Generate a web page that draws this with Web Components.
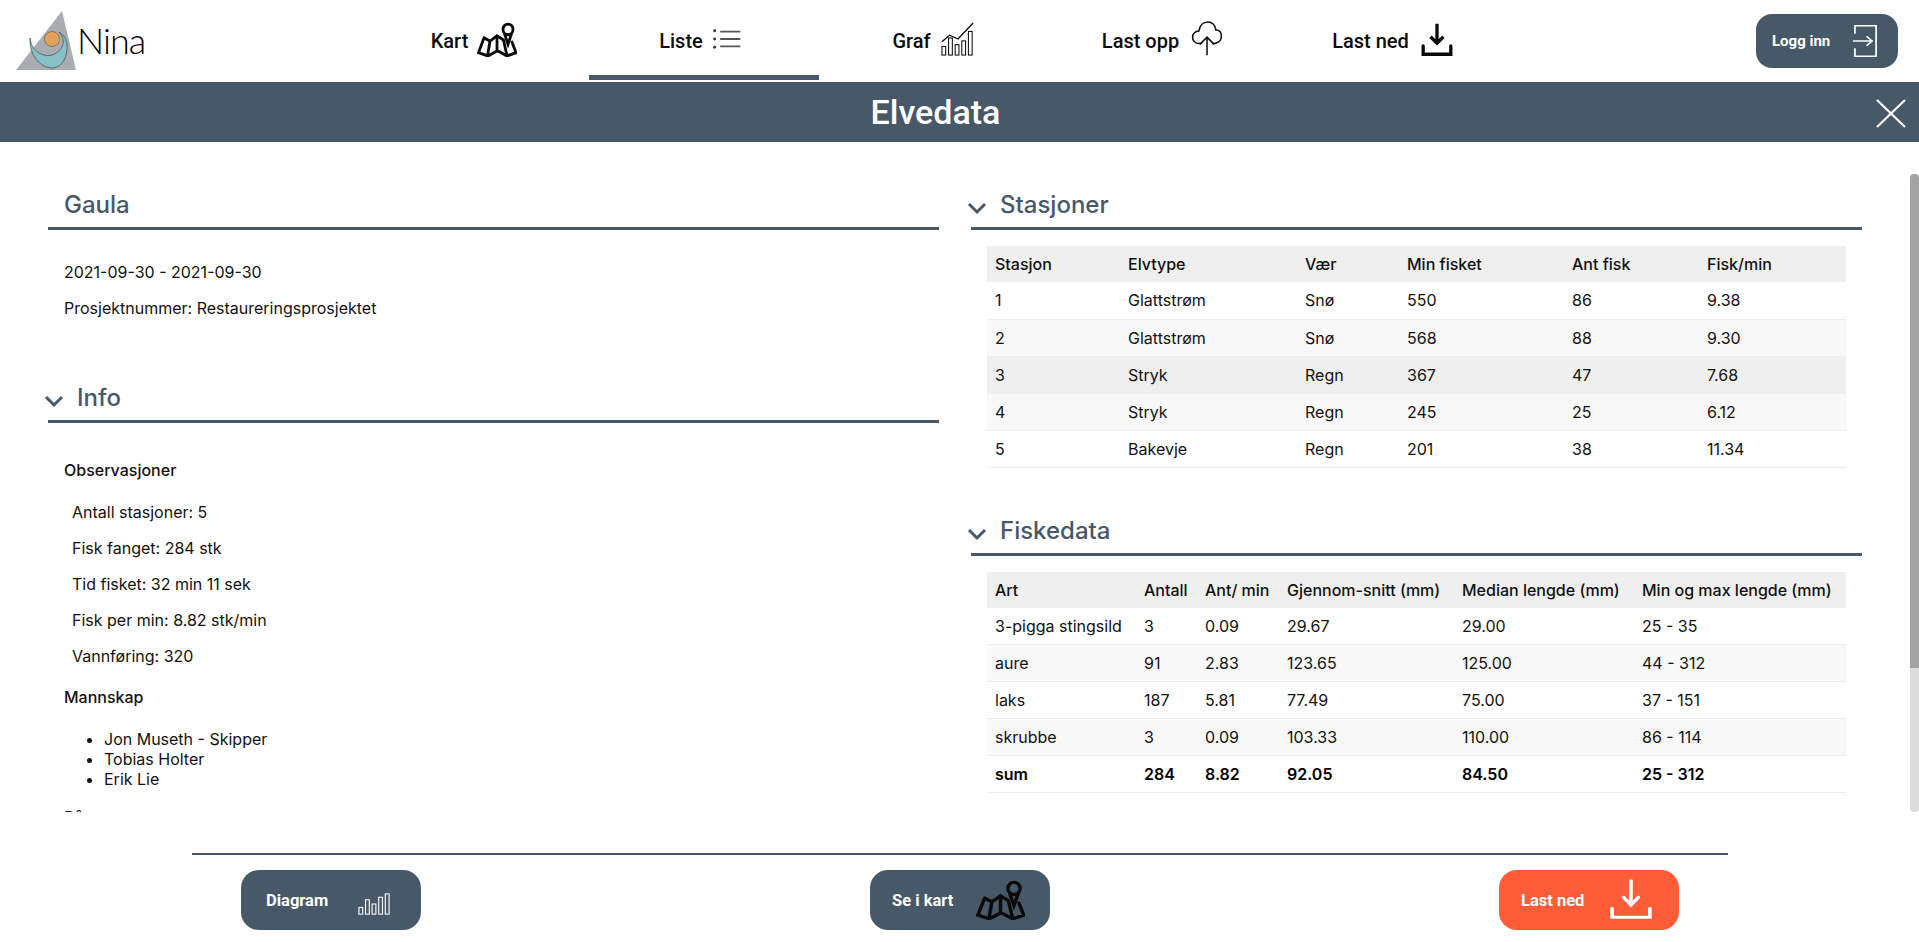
<!DOCTYPE html>
<html lang="no"><head><meta charset="utf-8"><title>Elvedata</title>
<style>
html,body{margin:0;height:100%;overflow:hidden;background:#fff;font-family:Inter,"Liberation Sans",sans-serif;color:#111}
x-app{display:flex;flex-direction:column;height:942px;position:relative}
</style></head><body>
<template id="icons">
<svg data-i="map" viewBox="0 0 40 33" fill="none" stroke="currentColor" stroke-width="2.8" stroke-linejoin="miter" preserveAspectRatio="none"><path d="M7 15 1.500 29l9.500 3 9.500-5 9.500 5 9-3-4-10M7 15l6 3 7-5 6.500 4M10.500 32 13 18M30 32l-3.500-15M20 13v14" stroke-linecap="round"/><circle cx="31" cy="7" r="5"/><path d="M27.500 11 31 21l3.500-10"/></svg>
<svg data-i="list" viewBox="0 0 32 24" fill="none" stroke="#555" stroke-width="2"><path d="M8 4h22M8 12h22M8 20h22"/><g fill="#333" stroke="none"><circle cx="2" cy="3" r="1.6"/><circle cx="2" cy="12" r="1.6"/><circle cx="2" cy="21" r="1.6"/></g></svg>
<svg data-i="graph" viewBox="0 0 36 36" fill="none" stroke="currentColor" stroke-width="1.1"><path d="M1 21 9 14l9 4L34 1" stroke-width="1.4"/><rect x="1" y="26" width="4" height="9"/><rect x="8" y="17" width="4" height="18"/><rect x="15" y="24" width="4" height="11"/><rect x="22" y="20" width="4" height="15"/><rect x="29" y="10" width="4" height="25"/></svg>
<svg data-i="cloud" viewBox="0 0 34 40" fill="none" stroke="currentColor" stroke-width="1.7"><path d="M11 25H8C3 25 1 21 1 18c0-4 3-7 7-7C9 5 13 1 18 1s8 4 9 9c4 0 6 3 6 7s-3 7-7 8h-3"/><path d="M17 38V19M9 26l8-8 8 8"/></svg>
<svg data-i="down" viewBox="0 0 34 38" fill="none" stroke="currentColor" stroke-width="3.6" stroke-linecap="round"><path d="M17 2v21M10 16l7 7 7-7" stroke-linecap="butt"/><path d="M2 26v9h30v-9"/></svg>
<svg data-i="login" viewBox="0 0 26 40" fill="none" stroke="currentColor" stroke-width="1.8" preserveAspectRatio="none"><path d="M2 11V1h22v38H2V29M0 20h20M14 14l6 6-6 6"/></svg>
<svg data-i="bars" viewBox="0 0 34 26" fill="none" stroke="currentColor" stroke-width="1.2" preserveAspectRatio="none"><rect x="1" y="17" width="4" height="8"/><rect x="8" y="8" width="4" height="17"/><rect x="15" y="13" width="4" height="12"/><rect x="22" y="5" width="4" height="20"/><rect x="29" y="1" width="4" height="24"/></svg>
<svg data-i="dl2" viewBox="0 0 40 46" fill="none" stroke="currentColor" stroke-width="3.4" stroke-linecap="round" preserveAspectRatio="none"><path d="M20 2v28M13 21l7 9 7-9"/><path d="M2 34v10h36V34"/></svg>
</template>
<x-app>
  <x-topbar>
    <x-tab label="Kart" icon="map" w="40" h="35"></x-tab>
    <x-tab label="Liste" icon="list" w="31" h="22" shift="6" active></x-tab>
    <x-tab label="Graf" icon="graph" w="36" h="34"></x-tab>
    <x-tab label="Last opp" icon="cloud" w="34" h="36" gap="11" shift="2"></x-tab>
    <x-tab label="Last ned" icon="down" w="34" h="35" gap="11" shift="2"></x-tab>
  </x-topbar>
  <x-titlebar>Elvedata</x-titlebar>
  <x-main>
    <x-col>
      <x-section heading="Gaula" plain>
        <x-p>2021-09-30 - 2021-09-30</x-p>
        <x-p>Prosjektnummer: Restaureringsprosjektet</x-p>
      </x-section>
      <x-section heading="Info">
        <x-p bold>Observasjoner</x-p>
        <x-p indent>Antall stasjoner: 5</x-p>
        <x-p indent>Fisk fanget: 284 stk</x-p>
        <x-p indent>Tid fisket: 32 min 11 sek</x-p>
        <x-p indent>Fisk per min: 8.82 stk/min</x-p>
        <x-p indent>Vannføring: 320</x-p>
        <x-p bold>Mannskap</x-p>
        <x-ul><span>Jon Museth - Skipper</span><span>Tobias Holter</span><span>Erik Lie</span></x-ul>
        <x-p bold mt="18">Båt</x-p>
      </x-section>
    </x-col>
    <x-col>
      <x-section heading="Stasjoner" tight>
        <x-table cols="133,177,102,165,135,147" hl="2" data='[["Stasjon","Elvtype","Vær","Min fisket","Ant fisk","Fisk/min"],["1","Glattstrøm","Snø","550","86","9.38"],["2","Glattstrøm","Snø","568","88","9.30"],["3","Stryk","Regn","367","47","7.68"],["4","Stryk","Regn","245","25","6.12"],["5","Bakevje","Regn","201","38","11.34"]]'></x-table>
      </x-section>
      <x-section heading="Fiskedata" tight>
        <x-table cols="149,61,82,175,180,212" sum data='[["Art","Antall","Ant/ min","Gjennom-snitt (mm)","Median lengde (mm)","Min og max lengde (mm)"],["3-pigga stingsild","3","0.09","29.67","29.00","25 - 35"],["aure","91","2.83","123.65","125.00","44 - 312"],["laks","187","5.81","77.49","75.00","37 - 151"],["skrubbe","3","0.09","103.33","110.00","86 - 114"],["sum","284","8.82","92.05","84.50","25 - 312"]]'></x-table>
      </x-section>
    </x-col>
    <x-scroll></x-scroll>
  </x-main>
  <x-footer>
    <x-btn label="Diagram" icon="bars" w="32" h="22" pad="25" gap="30" nudge="7"></x-btn>
    <x-btn label="Se i kart" icon="map" w="49" h="40" dark pad="22" gap="23"></x-btn>
    <x-btn label="Last ned" icon="dl2" w="42" h="40" orange pad="22" gap="26" nudge="-3"></x-btn>
  </x-footer>
</x-app>
<script>
const iconTpl=document.getElementById('icons');
function icon(n,w,h){const s=iconTpl.content.querySelector(`[data-i="${n}"]`).cloneNode(true);s.setAttribute('width',w);s.setAttribute('height',h);return s;}
class Base extends HTMLElement{
  constructor(){super();this.attachShadow({mode:'open'});}
}
customElements.define('x-app',class extends Base{connectedCallback(){this.shadowRoot.innerHTML='<style>:host{display:flex;flex-direction:column}</style><slot></slot>';}});
customElements.define('x-logo',class extends Base{connectedCallback(){this.shadowRoot.innerHTML=`<style>:host{display:flex;align-items:center;width:359px;padding-left:14px;box-sizing:border-box;height:82px}
span{font:300 36px Lato,sans-serif;color:#000;margin-left:-1px;margin-top:-3px;letter-spacing:-1px}svg{flex:none}</style>
<svg width="64" height="62" viewBox="14 9 64 62"><path d="M62 10 16 69h60z" fill="#a9adb2"/><path d="M30 37C29 56 42 67 52 67c10 0 16-11 15-24-1-7-5-10-8-12 5 5 5 11 3 15-4 7-12 10-18 8-8-2-13-8-14-17z" fill="#87c1c7" stroke="#333" stroke-width=".6"/><circle cx="52" cy="38" r="7.500" fill="#e2a358" stroke="#444" stroke-width=".5"/></svg><span>Nina</span>`;}});
customElements.define('x-topbar',class extends Base{connectedCallback(){this.shadowRoot.innerHTML=`<style>:host{display:flex;height:82px;flex:none;align-items:stretch}
.n{display:flex}.r{margin-left:auto;padding:14px 21px 0 0}</style><x-logo></x-logo><div class="n"><slot></slot></div><div class="r"><x-btn label="Logg inn" icon="login" w="25" h="32" small pad="16" gap="23"></x-btn></div>`;}});
customElements.define('x-tab',class extends Base{connectedCallback(){const a=this.hasAttribute('active');this.shadowRoot.innerHTML=`<style>:host{display:flex;width:230px;height:82px;box-sizing:border-box;align-items:center;justify-content:center;gap:${this.getAttribute('gap')||9}px;padding-bottom:4px;padding-right:${this.getAttribute('shift')||0}px;font:500 20px Roboto,sans-serif;color:#0b0b0b;position:relative}
span{margin-top:3px}i{position:absolute;left:0;right:0;top:75px;height:5px;background:#475869}svg{flex:none}</style><span>${this.getAttribute('label')}</span>${a?'<i></i>':''}`;
this.shadowRoot.insertBefore(icon(this.getAttribute('icon'),this.getAttribute('w'),this.getAttribute('h')),this.shadowRoot.querySelector('span').nextSibling);}});
customElements.define('x-titlebar',class extends Base{connectedCallback(){this.shadowRoot.innerHTML=`<style>:host{display:flex;height:60px;flex:none;background:#475869;color:#fff;align-items:center;justify-content:center;font:500 34px Roboto,sans-serif;position:relative;padding-right:48px;box-sizing:border-box}
svg{position:absolute;right:13px;top:17px;width:30px;height:29px}</style><slot></slot><svg viewBox="0 0 30 29" stroke="#fff" stroke-width="2.2" fill="none"><path d="M1 1l28 27M29 1 1 28"/></svg>`;}});
customElements.define('x-main',class extends Base{connectedCallback(){this.shadowRoot.innerHTML=`<style>:host{display:flex;gap:32px;flex:none;height:670px;overflow:hidden;padding:0 57px 0 48px;box-sizing:border-box;position:relative}</style><slot></slot>`;}});
customElements.define('x-col',class extends Base{connectedCallback(){this.shadowRoot.innerHTML=`<style>:host{display:block;flex:1 1 0;min-width:0;padding-top:38px}</style><slot></slot>`;}});
customElements.define('x-section',class extends Base{connectedCallback(){const plain=this.hasAttribute('plain'),tight=this.hasAttribute('tight');this.shadowRoot.innerHTML=`<style>:host{display:block;margin-bottom:${tight?'38px':'55px'}}
h2{margin:0;height:50px;box-sizing:border-box;border-bottom:3px solid #475869;font:500 24px/50px Inter,sans-serif;color:#475869;padding-left:${plain?16:29}px;position:relative}
svg{position:absolute;left:-4px;top:22px}.b{padding:${tight?'16px 16px 0':(plain?'32px 16px 0':'16px 16px 0')}}</style>
<h2>${plain?'':'<svg width="20" height="13" viewBox="0 0 20 13" fill="none" stroke="#475869" stroke-width="3"><path d="M2 2l8 8 8-8"/></svg>'}${this.getAttribute('heading')}</h2><div class="b"><slot></slot></div>`;}});
customElements.define('x-p',class extends Base{connectedCallback(){const b=this.hasAttribute('bold'),n=this.hasAttribute('indent');this.shadowRoot.innerHTML=`<style>:host{display:block;font:${b?500:400} 16px/20px Inter,sans-serif;color:#14110f;padding-left:${n?8:0}px;margin-bottom:${b?22:16}px;margin-top:${this.getAttribute('mt')||(b?21:0)}px}</style><slot></slot>`;}});
customElements.define('x-ul',class extends Base{connectedCallback(){const t=[...this.children].map(e=>`<li>${e.textContent}</li>`).join('');this.shadowRoot.innerHTML=`<style>:host{display:block;font:400 16px/20px Inter,sans-serif;color:#14110f;margin-bottom:16px}ul{margin:0;padding-left:40px}</style><ul>${t}</ul>`;}});
customElements.define('x-table',class extends Base{connectedCallback(){const d=JSON.parse(this.getAttribute('data')),c=this.getAttribute('cols').split(','),hl=+this.getAttribute('hl')||-1,sum=this.hasAttribute('sum');
const rows=d.slice(1).map((r,i)=>`<tr class="${i==hl?'h':i%2?'o':''} ${sum&&i==d.length-2?'s':''}">${r.map(x=>`<td>${x}</td>`).join('')}</tr>`).join('');
this.shadowRoot.innerHTML=`<style>:host{display:block}table{border-collapse:collapse;table-layout:fixed;width:859px;font:400 16px/20px Inter,sans-serif;color:#14110f}
th,td{padding:0 8px;height:37px;box-sizing:border-box;text-align:left;white-space:nowrap}
th{background:#efefef;font-weight:500;height:36px;color:#111}td{border-bottom:1px solid #ededed}tr.o td{background:#f8f8f8}tr.h td{background:#efefef}tr.s td{font-weight:600;color:#000}</style>
<table><colgroup>${c.map(w=>`<col style="width:${w}px">`).join('')}</colgroup><thead><tr>${d[0].map(x=>`<th>${x}</th>`).join('')}</tr></thead><tbody>${rows}</tbody></table>`;}});
customElements.define('x-scroll',class extends Base{connectedCallback(){this.shadowRoot.innerHTML=`<style>:host{position:absolute;right:0;top:32px;width:9px;display:flex;flex-direction:column}
.a{height:494px;background:#a3a3a3;border-radius:4px 4px 0 0}.b{height:144px;background:#dcdcdc;border-radius:0 0 4px 4px}</style><div class="a"></div><div class="b"></div>`;}});
customElements.define('x-footer',class extends Base{connectedCallback(){this.shadowRoot.innerHTML=`<style>:host{display:block;flex:none;padding:0 191px 0 192px}
.l{height:2px;background:#475869;margin-top:41px}.r{display:flex;justify-content:space-between;padding:15px 49px 0}</style><div class="l"></div><div class="r"><slot></slot></div>`;}});
customElements.define('x-btn',class extends Base{connectedCallback(){const s=this.hasAttribute('small'),o=this.hasAttribute('orange'),dk=this.hasAttribute('dark');const nudge=this.getAttribute('nudge')||0;
this.shadowRoot.innerHTML=`<style>:host{display:inline-flex;align-items:center;gap:${this.getAttribute('gap')}px;padding-left:${this.getAttribute('pad')}px;width:${s?142:180}px;height:${s?54:60}px;box-sizing:border-box;border-radius:${s?16:18}px;background:${o?'#ff5c38':'#475869'};color:${dk?'#0b0b0b':'#fff'};font:700 ${s?15:16.5}px Roboto,sans-serif}
span{color:#fff}svg{flex:none;margin-top:${nudge}px}</style><span>${this.getAttribute('label')}</span>`;
this.shadowRoot.appendChild(icon(this.getAttribute('icon'),this.getAttribute('w'),this.getAttribute('h')));}});
</script>
</body></html>
